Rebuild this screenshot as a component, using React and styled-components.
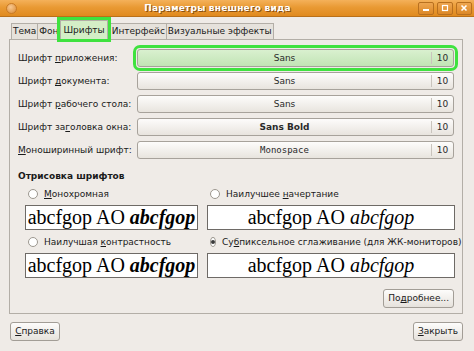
import React from 'react'
import styled, { createGlobalStyle } from 'styled-components'

const GlobalStyle = createGlobalStyle`
  html, body {
    margin: 0;
    padding: 0;
    background: #efebe7;
  }
  body {
    font-family: 'DejaVu Sans', 'Liberation Sans', sans-serif;
    font-size: 9px;
    color: #1a1a1a;
  }
`

const Window = styled.div`
  width: 474px;
  height: 351px;
  display: flex;
  flex-direction: column;
  background: #efebe7;
  overflow: hidden;
`

const TitleBar = styled.div`
  height: 16px;
  flex: none;
  display: flex;
  align-items: center;
  padding: 0 2px 0 6px;
  background: linear-gradient(#f4b15a, #e99a34 45%, #e08a1f);
  border-bottom: 1px solid #b9701a;
`

const MenuDot = styled.span`
  width: 9px;
  height: 9px;
  border-radius: 50%;
  background: radial-gradient(circle at 40% 35%, #f8c890, #d98a35);
  border: 1px solid #c97a25;
`

const Title = styled.div`
  flex: 1;
  text-align: center;
  color: #fff;
  font-weight: bold;
  font-size: 9px;
  letter-spacing: 0.2px;
  text-shadow: 1px 1px 0 #8a5012;
`

const WinButtons = styled.div`
  display: flex;
  gap: 3px;
`

const WinButton = styled.span`
  width: 14px;
  height: 11px;
  display: flex;
  align-items: center;
  justify-content: center;
  border: 1px solid #b8701f;
  border-radius: 2px;
  background: linear-gradient(#eea650, #dc8827);
`

const Body = styled.div`
  flex: 1;
  display: flex;
  flex-direction: column;
  padding: 6px 11px 10px 9px;
`

const TabBar = styled.div`
  display: flex;
  align-items: flex-end;
  height: 16px;
  padding-left: 2px;
`

const Tab = styled.div`
  height: 15px;
  line-height: 15px;
  padding: 0 1px;
  border: 1px solid #b3aea7;
  border-bottom: none;
  margin-right: -1px;
  background: ${p => (p.$active ? '#d4eec6' : '#e6e2dc')};
  position: relative;
  ${p => p.$active && `
    height: 18px;
    line-height: 18px;
    margin: 0 2px 0 1px;
    padding: 0 2px;
    outline: 3px solid #3fe23f;
    outline-offset: 0;
    z-index: 1;
  `}
`

const Panel = styled.div`
  flex: 1;
  border: 1px solid #b3aea7;
  background: #efebe7;
  padding: 9px 8px 0 8px;
  display: flex;
  flex-direction: column;
`

const FontGrid = styled.div`
  display: grid;
  grid-template-columns: 119px 1fr;
  row-gap: 5px;
  align-items: center;
`

const Label = styled.div`
  white-space: nowrap;
`

const FontButton = styled.div`
  height: 16px;
  display: flex;
  align-items: center;
  border: 1px solid #a7a29b;
  border-radius: 3px;
  background: ${p => (p.$hl ? 'linear-gradient(#d9f0cf, #c2e4b5)' : 'linear-gradient(#fdfcfb, #e8e4de)')};
  ${p => p.$hl && `
    outline: 3px solid #3fe23f;
    outline-offset: 1px;
  `}
`

const FontName = styled.span`
  flex: 1;
  text-align: center;
  font-weight: ${p => (p.$bold ? 'bold' : 'normal')};
  font-family: ${p => (p.$mono ? "'DejaVu Sans Mono', monospace" : 'inherit')};
  color: #2a2a2a;
`

const FontSize = styled.span`
  width: 21px;
  height: 12px;
  line-height: 12px;
  text-align: center;
  border-left: 1px solid #c9c4bd;
  color: #2a2a2a;
`

const Heading = styled.div`
  font-weight: bold;
  margin-top: 11px;
  line-height: 13px;
`

const RenderGrid = styled.div`
  display: grid;
  grid-template-columns: 173px 248px;
  column-gap: 9px;
  row-gap: 5px;
  margin: 4px 0 0 7px;
`

const Cell = styled.div`
  display: flex;
  flex-direction: column;
  gap: 5px;
`

const RadioRow = styled.div`
  display: flex;
  align-items: center;
  gap: 6px;
  height: 13px;
  padding-left: 3px;
  white-space: nowrap;
`

const Radio = styled.span`
  width: 8px;
  height: 8px;
  border-radius: 50%;
  border: 1px solid #9c978f;
  background: #fff;
  display: flex;
  align-items: center;
  justify-content: center;
  &::after {
    content: '';
    width: 4px;
    height: 4px;
    border-radius: 50%;
    background: ${p => (p.$on ? '#3a3a3a' : 'transparent')};
  }
`

const Preview = styled.div`
  height: 23px;
  border: 1px solid #6e6a66;
  background: #fff;
  display: flex;
  align-items: center;
  justify-content: center;
  font-family: 'Liberation Serif', 'DejaVu Serif', serif;
  font-size: 20px;
  white-space: nowrap;
  overflow: hidden;
  color: #000;
`

const Slanted = styled.span`
  font-style: italic;
  font-weight: ${p => (p.$bold ? 'bold' : 'normal')};
`

const DetailsRow = styled.div`
  display: flex;
  justify-content: flex-end;
  margin-top: 11px;
`

const Button = styled.div`
  height: 17px;
  line-height: 17px;
  padding: 0 ${p => (p.$narrow ? 4 : 7)}px;
  min-width: 40px;
  text-align: center;
  border: 1px solid #a29d96;
  border-radius: 3px;
  background: linear-gradient(#fdfcfb, #e6e2dc);
  white-space: nowrap;
`

const BottomBar = styled.div`
  display: flex;
  justify-content: space-between;
  margin-top: 8px;
  padding-left: 1px;
`

const U = styled.span`
  text-decoration: underline;
`

const fonts = [
  { label: <>Шрифт <U>п</U>риложения:</>, name: 'Sans', hl: true },
  { label: <>Шрифт <U>д</U>окумента:</>, name: 'Sans' },
  { label: <>Шрифт <U>р</U>абочего стола:</>, name: 'Sans' },
  { label: <>Шрифт за<U>г</U>оловка окна:</>, name: 'Sans Bold', bold: true },
  { label: <><U>М</U>оноширинный шрифт:</>, name: 'Monospace', mono: true }
]

const modes = [
  { label: <><U>М</U>онохромная</>, bold: true },
  { label: <>Наилучшее <U>н</U>ачертание</> },
  { label: <>Наилучшая <U>к</U>онтрастность</>, bold: true },
  { label: <>Су<U>б</U>пиксельное сглаживание (для ЖК-мониторов)</>, on: true }
]

export default function App () {
  return (
    <Window>
      <GlobalStyle />
      <TitleBar>
        <MenuDot />
        <Title>Параметры внешнего вида</Title>
        <WinButtons>
          <WinButton>
            <svg width='8' height='8' viewBox='0 0 8 8'>
              <rect x='1' y='5' width='6' height='2' fill='#fff' />
            </svg>
          </WinButton>
          <WinButton>
            <svg width='8' height='8' viewBox='0 0 8 8'>
              <rect x='1.5' y='1.5' width='5' height='5' fill='none' stroke='#fff' strokeWidth='1.2' />
            </svg>
          </WinButton>
          <WinButton>
            <svg width='8' height='8' viewBox='0 0 8 8'>
              <path d='M1.5 1.5 L6.5 6.5 M6.5 1.5 L1.5 6.5' stroke='#fff' strokeWidth='1.6' />
            </svg>
          </WinButton>
        </WinButtons>
      </TitleBar>
      <Body>
        <TabBar>
          <Tab>Тема</Tab>
          <Tab>Фон</Tab>
          <Tab $active>Шрифты</Tab>
          <Tab>Интерфейс</Tab>
          <Tab>Визуальные эффекты</Tab>
        </TabBar>
        <Panel>
          <FontGrid>
            {fonts.map((f, i) => (
              <React.Fragment key={i}>
                <Label>{f.label}</Label>
                <FontButton $hl={f.hl}>
                  <FontName $bold={f.bold} $mono={f.mono}>{f.name}</FontName>
                  <FontSize>10</FontSize>
                </FontButton>
              </React.Fragment>
            ))}
          </FontGrid>
          <Heading>Отрисовка шрифтов</Heading>
          <RenderGrid>
            {modes.map((m, i) => (
              <Cell key={i}>
                <RadioRow>
                  <Radio $on={m.on} />
                  <span>{m.label}</span>
                </RadioRow>
                <Preview>
                  abcfgop AO&nbsp;<Slanted $bold={m.bold}>abcfgop</Slanted>
                </Preview>
              </Cell>
            ))}
          </RenderGrid>
          <DetailsRow>
            <Button $narrow>По<U>д</U>робнее...</Button>
          </DetailsRow>
        </Panel>
        <BottomBar>
          <Button $narrow>
            <U>С</U>правка
          </Button>
          <Button $narrow>
            <U>З</U>акрыть
          </Button>
        </BottomBar>
      </Body>
    </Window>
  )
}
